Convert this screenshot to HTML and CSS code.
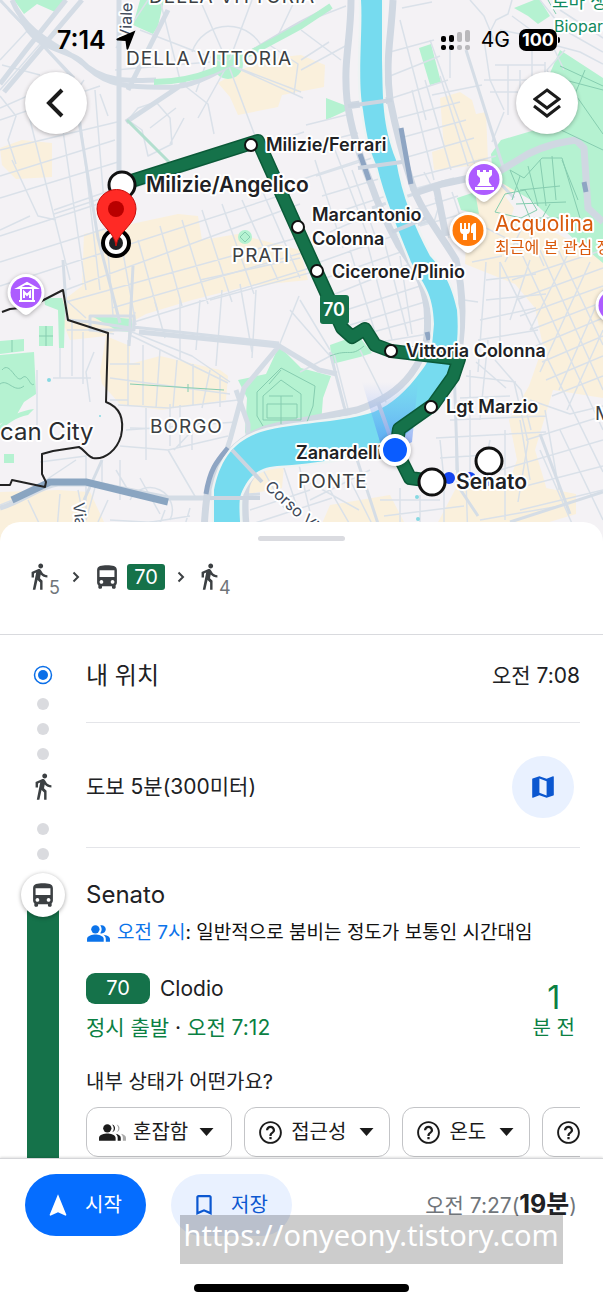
FILE: index.html
```
<!DOCTYPE html>
<html lang="ko">
<head>
  <meta charset="UTF-8" />
  <meta name="viewport" content="width=device-width, initial-scale=1.0"/>
  <title>Senato - Milizie/Angelico</title>
  <link rel="stylesheet" href="styles.css">
</head>
<body>
  <!-- Icons -->
  <svg class="sprite" width="0" height="0" aria-hidden="true">
    <symbol id="walk" viewBox="5 1 15 23"><path d="M13.5 5.5c1.1 0 2-.9 2-2s-.9-2-2-2-2 .9-2 2 .9 2 2 2zM9.8 8.9L7 23h2.1l1.8-8 2.1 2v6h2v-7.5l-2.1-2 .6-3C14.8 12 16.8 13 19 13v-2c-1.9 0-3.5-1-4.3-2.4l-1-1.6c-.4-.6-1-1-1.7-1-.3 0-.5.1-.8.1L6 8.3V13h2V9.6l1.8-.7"/></symbol>
    <symbol id="bus" viewBox="3 1 18 21"><path d="M4 16c0 .88.39 1.67 1 2.22V20c0 .55.45 1 1 1h1c.55 0 1-.45 1-1v-1h8v1c0 .55.45 1 1 1h1c.55 0 1-.45 1-1v-1.78c.61-.55 1-1.34 1-2.22V6c0-3.5-3.58-4-8-4s-8 .5-8 4v10zm3.5 1c-.83 0-1.5-.67-1.5-1.5S6.67 14 7.5 14s1.5.67 1.5 1.5S8.33 17 7.5 17zm9 0c-.83 0-1.5-.67-1.5-1.5s.67-1.5 1.5-1.5 1.5.67 1.5 1.5-.67 1.5-1.5 1.5zm1.5-5.500H6V6h12v5.500z"/></symbol>
    <symbol id="people" viewBox="0 2 24 20"><path d="M16.67 13.13C18.04 14.06 19 15.32 19 17v3h4v-3c0-2.18-3.57-3.47-6.33-3.87zM15 12c2.210 0 4-1.79 4-4s-1.79-4-4-4c-.47 0-.91.1-1.33.24C14.5 5.27 15 6.58 15 8s-.5 2.73-1.33 3.76c.42.14.86.24 1.33.24z"/><circle cx="9" cy="8" r="4"/><path d="M9 13c-2.670 0-8 1.340-8 4v3h16v-3c0-2.660-5.330-4-8-4z"/></symbol>
    <symbol id="crowd" viewBox="0 3 28 18"><circle cx="9" cy="8" r="4"/><path d="M9 13c-2.670 0-8 1.340-8 4v3h16v-3c0-2.660-5.330-4-8-4zM13.700 4.200a4 4 0 0 1 0 7.600 6 6 0 0 0 0-7.600zM17 13.200c2.700.6 5 1.800 5 3.800v3h-3v-3c0-1.600-.8-2.800-2-3.800z"/><path fill="#a9a9a9" d="M18 4.200a4 4 0 0 1 0 7.600 6 6 0 0 0 0-7.600zM22 13.200c2.700.6 5 1.800 5 3.800v3h-3v-3c0-1.600-.8-2.800-2-3.800z"/></symbol>
    <symbol id="help" viewBox="1 1 22 22"><path d="M11 18h2v-2h-2v2zm1-16C6.480 2 2 6.480 2 12s4.480 10 10 10 10-4.480 10-10S17.520 2 12 2zm0 18.300c-4.600 0-8.300-3.700-8.300-8.300S7.400 3.700 12 3.700s8.300 3.700 8.300 8.300-3.700 8.300-8.300 8.300zM12 6c-2.210 0-4 1.790-4 4h2c0-1.100.9-2 2-2s2 .9 2 2c0 2-3 1.750-3 5h2c0-2.250 3-2.500 3-5 0-2.210-1.790-4-4-4z"/></symbol>
    <symbol id="foldmap" viewBox="2 2 20 20"><path d="M20.5 3l-.16.03L15 5.1 9 3 3.36 4.9c-.21.07-.36.25-.36.48V20.5c0 .28.22.5.5.5l.16-.03L9 18.9l6 2.1 5.640-1.900c.21-.07.36-.25.36-.48V3.500c0-.28-.22-.5-.5-.5zM15 19l-6-2.110V5l6 2.110V19z"/></symbol>
    <symbol id="chevron" viewBox="0 0 8 12"><path d="M1.500 1.500L6 6l-4.500 4.500" fill="none" stroke="currentColor" stroke-width="2"/></symbol>
    <symbol id="caret" viewBox="0 0 14 8"><path d="M0 0h14L7 8z"/></symbol>
    <symbol id="pin" viewBox="0 0 40 46"><path d="M20 1a18.500 18.500 0 0 1 18.500 18.500c0 9-6 13.500-11 17.500-3 2.500-5 5-7.500 5s-4.500-2.500-7.500-5c-5-4-11-8.500-11-17.500A18.500 18.500 0 0 1 20 1z" fill="#fff"/><circle cx="20" cy="19.500" r="15.500"/></symbol>
  </svg>

  <section class="map">
    <svg class="map-canvas" viewBox="0 0 603 542" preserveAspectRatio="xMidYMin slice">
      <defs>
        <linearGradient id="beam" x1="0" y1="1" x2="0" y2="0">
          <stop offset="0" stop-color="#3f7cf5" stop-opacity=".6"/>
          <stop offset="1" stop-color="#7fa6ff" stop-opacity="0"/>
        </linearGradient>
      </defs>
      <rect class="land" width="603" height="542"/>

      <!-- commercial areas -->
      <g class="beige">
        <path d="M0 148l22-8 30 3v34l-36 2-14-14z"/>
        <path d="M240 70l32-12 29-3 24 10-1 22-42 8-4 12-40 8-8-18-12-14z"/>
        <path d="M84 234l38-8 56-12 20 2 4 24 36-6 62 16 8 30-60 6-56 14-46 14-40 22-36 4-14-34 26-20z"/>
        <path d="M106 336l24 10v18l30-8 60 14 8 6-2 24-64 10-42-6-18-20-2-12z"/>
        <path d="M440 98l20-6 12 8 4 14 10-2 2 50 24 4 2 26-14 6-12-34-54 6-2-18 12-4z"/>
        <path d="M468 200l34-8 12 16-4 12 44 12 49 26v140l-50-8-18 60 12 40-20 32h-22l-4-18 16-44-8-40 20-34 14-40-8-38-20-24-50-20z"/>
        <path d="M0 492l58-2 32 2 14 30-10 20H0zM246 480l18-14 20 0-2 22-34 6zM330 505l60-10 14 27-20 20h-70z"/>
        <path d="M456 488l60-6 60 12 0 20-60 18-80-6z"/>
      </g>

      <!-- parks -->
      <g class="park">
        <path d="M14 0l10 14 13-10 18 8L66 0zM140 0h24l-6 26-5 8-20-9z"/>
        <path d="M560 50l43 28v185l-28-23-44-40-38-22-2-24 10-14 34-10 14-22 16-8-18-20z"/>
        <path d="M514 8l20-8h6l10 16-12 8-10-8zM419 48l12-4 10 38-11 3zM326 98l26 10-26 12zM457 198l18-6 4 22-18-4z"/>
        <path d="M279 346l22 22 30 8-8 22-2 26-52 8-18 12-6-12 2-34-9-18 28-6z"/>
        <path d="M330 345l28-10 14 18-12 4-28 7zM0 341l24-2v12L0 354zM39 326h14v20H39zM90 315l42 4v13l-14-1z"/>
        <path d="M0 355l34-3 2 42-12 8-8 14-16 8zM44 298l18 0 3 10-1 40-5 0-1-38-13-5zM0 425c12-10 20-14 34-16l-6 6c-12 2-22 10-28 16zM4 454h10v9H4z"/>
        <circle cx="228" cy="64" r="15"/><circle cx="245" cy="237" r="7"/>
      </g>

      <!-- streets -->
      <path class="street" d="M0 108l64-28M0 120l100-34M0 176l115-36M0 150l117-28M0 198l118-36M54 210l196-68M54 214l250-82M0 236l110-36M0 262l120-38M0 286l310-100M60 292l240-88M66 302l238-66M112 308l200-58M134 322l176-54M0 230l30-14M12 160l26 56 18 4M30 120l40 160M60 110l26 180M78 100l22 190M95 90l18 225M118 225l18 100M138 240l20 72M160 226l22 80M182 220l26 84M202 210l30 92M222 204l32 90M242 200l36 80M262 190l38 88M0 96l16 20-8 24 8 24"/>
      <path class="street" d="M0 60l28-30 40 44M28 30l-20-20M0 90l40-46M40 75l-38-10M84 80l-10 14M100 94l8 22M128 120l14 10 6 26 24-12-2-26-14-16-18 6zM170 144l14-26M150 128l26-20M196 92l14-40M180 82l28 22 6 30M228 64l-30 54M228 64l30 80M228 64l73 28M228 64l-88-34M228 64L200 0M228 64L252 0M192 52a38 38 0 0 1 72 0M228 64l75 34M148 0l-32 48M160 0l20 80M115 70l95-8M295 0l-20 42M268 44l30 20-4 30M301 60l28-18M301 70l48-26M301 30l40 30M310 20l36-14M306 125l40-10M310 145l48-12M316 176l56-18M322 196l60-18M326 216l60-20M330 232l50-22M315 160l28 88M335 150l32 84M352 170l26 74M300 180l60-20"/>
      <path class="street" d="M390 52l44-12M390 76l50-20M392 98l56-18M398 118l62-16M400 138l66-18M404 158l70-20M410 178l86-22M400 20l26 100M412 90l22 90M425 80l26 90M440 76l28 90M402 8l30-6M430 40l54 150M450 38v40M432 95l50-10M484 40l6 40 14 30M484 80h50M490 92h44M495 65h50M508 65v50M520 70v45M532 30v90M545 62v30M504 112l-12 30M486 40l10-20 12-6 4-14M470 0l14 16 10 24 16 4M500 30l50 10 14 30M512 16l38 28 30 8 23 12M540 0l24 30 39 22M560 10l43 28M565 50l-18 20 10 20M410 190l44-12M414 210l44-14M420 226l42-12M424 172l16 30-6 20M435 198l14 40M452 192l12 36"/>
      <path class="street" d="M66 300l20 18M88 330l26 4M67 330h40M72 320v56M83 332v52M94 352l-8 20 4 30M60 348v30M53 378h38M37 370v70M110 364h30M110 378l120 16M110 400h18M128 340v65M143 345v60M160 350l-4 58M177 360l-4 48M193 364v42M210 370l-8 38M220 375v32M130 335l98 48M132 332l60 24 38 26M135 312l-6 34M155 302l10 36M180 300v60M200 300l-4 50M222 290l-6 76M240 284l12 68M256 290l-4 68M200 280l100-22M210 300l110-30M118 405l50 3 70-8M146 408v52M180 405v42M192 430v20M170 404v42M204 418l-30 32M126 430l110-8M130 428l40 1M120 446l48 4 60-14M168 450l28 48M102 460v22M86 455v64M40 462l46-6M46 480l30-20M120 460v40M0 505l40-16M28 500l20 42M60 494l-4 48M78 490l10 50M96 484l-10 36M108 500l-10 22M116 470l12 20M140 478l20 36M165 510l-12 32M190 508l-10 34M110 520l70 4M100 530l90-14M130 500a22 22 0 0 1 40 20"/>
      <path class="street" d="M320 262l90-32M320 280l98-34M330 296l90-36M340 312l80-26M350 325l78-24M362 335l66-18M380 342l48-8M350 250l28 92M368 246l24 94M384 240l24 96M400 256l12 78M300 300l30 50M290 310l40 46M279 346l20-50M300 372l34-18M334 354l22 86M360 350l30 60M240 488l30-36M262 468l22 40M280 456l20 60M296 452l14 60M250 510l60-20M252 524l80-26M310 500l60-30M305 480l54 30M330 490l30 52M350 480l30 60M380 500h60M400 488v52M420 495v47M444 490v50M466 480l2 62M384 516l80-10M440 458l60-4M436 438l110-6M450 420l96-4M460 398l50-2M466 376l50 6M440 440l4 40M456 410v60M470 370v110M488 340l-8 80M495 360l26 30 10 40M476 362l30 26M486 262l-8 110M500 262v90M478 340l60-10M480 320l56-12M486 300l60-6M486 280l50-6M490 440l-6 30M505 430v90M520 420l10 60M545 410l14 80M500 470l103-30M510 490l93-24M520 510l83-20M480 520l80-14M540 450l40 92M560 430l43 90"/>
      <path class="street" d="M500 262l103 210M520 250l83 180M540 250l63 140M556 245l47 100M512 280l91-30M516 300l87-32M520 316l83-30M530 330l73-28M536 346l67-28M542 362l61-26M546 380l57-24M552 396l51-20M530 260l-20 60M570 250l-40 80M590 262l-50 110M603 290l-44 100M603 330l-36 80M530 400l40 14 33-8M526 440l77-24M514 382l14 60-10 60M505 262l20-40M524 222l20 44M480 225l40 20M464 300l14 2M472 262l30-6"/>
      <path class="road" d="M72 78l26 160 22 85M74 78L0 0M30 120l35-40M129 346l4-80M102 460l-18 40M200 498l60-4M232 448l22 22M330 352l14 54 10 30M466 50l38 120M488 170l26 28M540 434l30 80M510 522l93-30M454 366l4 120 20 30M372 208l48-16M390 234l42-14"/>
      <path class="road" d="M63 260l4 60M67 320l24 2 40 6M90 316h44v14H90zM133 327l146 16M350 438l34 104"/>

      <path class="avenue" d="M0 84l26-34 40-50M4 92L82 0M12 0c16 40 60 50 76 68 20 18 40 20 86 19 30-2 60-26 127-64L330 8M22 18c10 30 40 30 58 42 24 26 60 20 76 20M119 0v180M128 90l40-80M126 122l60-40"/>
      <path class="avenue" d="M0 508c22-6 40-22 58-24h40l70 14h38M210 500l20-60 14-52 35-42 40 24 18 4M236 390l12 34 0 16-18 14M279 346l-140-14"/>
      <path class="avenue wide" d="M351 0c0 40-8 60-4 100 4 30 14 60 24 84 6 18 16 40 28 62 14 20 24 32 28 62 2 30 0 44-16 66-12 16-30 28-54 36l-80 16c-40 8-62 40-70 70-2 16-4 30-2 46M393 0c-2 40-8 60-3 100 8 40 14 60 22 84 8 26 30 52 44 76 6 24 8 50 4 84M446 390l-30 32-20 18-94 18c-30 2-52 10-56 30-2 16 0 40 2 54M346 106l44-6M412 194l30-10 56-12 30-18c20-10 36-12 48-14l8 8 4 60 15 14M436 186l10 50"/>
      <path class="tunnel" d="M360 154l9 26M401 128l10 56M584 182l2 10M427 332l2 8M228 448c-10 12-18 20-22 46"/>
      <path class="tunnel wide" d="M12 500l38-18h36l82 20"/>

      <path class="greenway" d="M154 82c50 0 80-20 147-56l30-20"/>
      <path class="greenway thin" d="M127 120l42 42"/>
      <path class="contour" d="M510 170l14 8 18-20 20 0 18 60-50 0zM520 176l-8 24M528 166l10 40M540 160l6 46M552 156l4 44M520 190l40-4M516 204l50-2M562 160l16 40M550 204l-10 18M585 70l-10 24 28 40M560 66l43 20M565 80l38 10M540 120l63 30M495 212l10-18 20-4 12 20-16 8zM548 0l8 14"/>
      <path class="contour" d="M281 368l-24 24 0 24 6 10M281 368l34 18-2 20-6 16M281 380l-18 16v24h38v-26zM281 396v28M269 396l24 0M267 404h30v14h-30zM281 370l-12 14M330 356c20-8 20 2 34-10M2 370c8-10 14 14 20 8s8 10 12 6M0 384c8-6 14 10 24 2M39 336h14M46 326v20M12 340v12M130 384l94 6M188 384v8M245 232l5 5-5 5-5-5z"/>

      <!-- Tiber -->
      <path class="river-bank" d="M361 0c2 30-4 80 2 110 4 30 8 44 14 56 8 34 24 70 34 96 12 22 22 30 23 62-2 22-2 34-12 46-16 22-30 34-48 42-30 10-70 10-106 18-34 8-48 30-54 60v56h28c-2-24-4-44-1-52 8-18 16-26 36-28 40-2 80-10 108-18 26-14 46-36 60-64 12-24 14-48 12-74-6-28-16-42-27-54-16-30-28-60-34-96-14-36-13-60-14-100V0z"/>
      <path class="river" d="M361 0c2 30-4 80 2 110 4 30 8 44 14 56 8 34 24 70 34 96 12 22 22 30 23 62-2 22-2 34-12 46-16 22-30 34-48 42-30 10-70 10-106 18-34 8-48 30-54 60v56h28c-2-24-4-44-1-52 8-18 16-26 36-28 40-2 80-10 108-18 26-14 46-36 60-64 12-24 14-48 12-74-6-28-16-42-27-54-16-30-28-60-34-96-14-36-13-60-14-100V0z"/>
      <path class="bridge" d="M348 106l44-6M358 168l44-6M392 232l34-14M232 450l30 32M210 498h50M378 402l12 34"/>

      <!-- Vatican border -->
      <path class="border" d="M2 312l8-3 20-2 33-17 5 30 40 13-2 69c16 6 18 20 15 34-4 14-16 24-28 22-6-2-8-8-14-11l-26 4-11 3v20l4 8-1 5-33-7-2 5H0"/>
      <circle class="fountain" cx="49" cy="380" r="2"/><circle class="fountain" cx="100" cy="416" r="1"/>
      <circle class="fountain" cx="417" cy="497" r="2"/><circle class="fountain" cx="418" cy="519" r="2"/>

      <!-- area names -->
      <g class="area">
        <text x="149" y="3">DELLA VITTORIA</text>
        <text x="126" y="65">DELLA VITTORIA</text>
        <text x="232" y="262">PRATI</text>
        <text x="150" y="433">BORGO</text>
        <text x="298" y="488">PONTE</text>
        <text x="595" y="420">MONTI</text>
      </g>
      <text class="city" x="0" y="440">can City</text>
      <g class="street-name">
        <text transform="translate(131 40) rotate(-88)">Viale Angelico</text>
        <text transform="translate(73 503) rotate(84)">Via</text>
        <text transform="translate(264 488) rotate(42)">Corso Vittorio</text>
      </g>
      <text class="poi-green" x="552" y="8">로마 생태</text>
      <text class="poi-green small" x="554" y="32">Bioparco</text>

      <!-- bus route -->
      <path class="beam" d="M362 382h56l-6 60-16 8-16-8z"/>
      <path class="route-edge" d="M122 184l136-43 42 94 34 75 8 18 10 9 13-8 10 16 16 6 68 8-6 18-20 28-34 24-3 21 14 28 22 3"/>
      <path class="route" d="M122 184l136-43 42 94 34 75 8 18 10 9 13-8 10 16 16 6 68 8-6 18-20 28-34 24-3 21 14 28 22 3"/>
      <rect class="route-tag" x="320" y="295" width="29" height="29" rx="3"/>
      <text class="route-tag-text" x="334" y="316">70</text>
      <g class="stop">
        <circle cx="251" cy="145" r="6"/><circle cx="298" cy="227" r="6"/><circle cx="317" cy="271" r="6"/>
        <circle cx="391" cy="351" r="6"/><circle cx="431" cy="407" r="6"/>
      </g>
      <g class="stop-name">
        <text x="266" y="151">Milizie/Ferrari</text>
        <text x="312" y="221">Marcantonio</text>
        <text x="312" y="245">Colonna</text>
        <text x="332" y="278">Cicerone/Plinio</text>
        <text x="406" y="357">Vittoria Colonna</text>
        <text x="446" y="413">Lgt Marzio</text>
        <text x="296" y="459">Zanardelli</text>
      </g>
      <g class="walk-dots"><circle cx="449" cy="478" r="6"/><circle cx="470" cy="478" r="6"/><circle cx="488" cy="480" r="6"/></g>
      <g class="stop big"><circle cx="122" cy="185" r="13"/><circle cx="432" cy="482" r="13"/><circle cx="489" cy="461" r="13"/></g>
      <g class="stop-name end">
        <text x="146" y="192">Milizie/Angelico</text>
        <text x="456" y="489">Senato</text>
      </g>
      <circle class="me" cx="395" cy="450" r="14"/>
      <circle class="target" cx="116" cy="243" r="13"/>
      <circle cx="116" cy="243" r="7"/>
      <path class="dest" d="M116 246c-1-15-19-21-19-37a19.500 19.500 0 0 1 39 0c0 16-18 22-20 37z"/>
      <circle class="dest-core" cx="116" cy="209" r="8"/>

      <!-- places -->
      <g class="places">
        <use href="#pin" x="464" y="160" width="40" height="46" fill="#ad5cff"/>
        <path class="glyph" d="M477 170h3v2h3v-2h3v2h3v-2h3v5l-3 3v4l3 4h-15l3-4v-4l-3-3zM475 187h19v3h-19z"/>
        <use href="#pin" x="448" y="211" width="40" height="46" fill="#ff7a0a"/>
        <path class="glyph" d="M460 223h2v6h2v-6h2v6h2v-6h2v7c0 2-1 4-3 4v6h-4v-6c-2 0-3-2-3-4zM473 240v-7h-2v-5c0-3 2-5 5-5v17z"/>
        <use href="#pin" x="6" y="273" width="40" height="46" fill="#ad5cff"/>
        <path class="glyph-line" d="M18 288l9-5 9 5zM19 301h16M21 289v11M33 289v11M24 298v-6l3 3 3-3v6"/>
        <use href="#pin" x="594" y="286" width="40" height="46" fill="#ad5cff"/>
      </g>
      <text class="poi-food" x="495" y="231">Acquolina</text>
      <text class="poi-food small" x="495" y="253">최근에 본 관심 장소</text>
    </svg>

    <header class="overlay">
      <div class="status-bar">
        <span class="clock">7:14</span>
        <svg class="locator" viewBox="0 0 20 20" width="20" height="20"><path d="M19.500.5L1 8.500c-1 .5-.8 1.700.3 1.900l8.200.6 1 7.800c.2 1.100 1.300 1.200 1.800.2z"/></svg>
        <svg class="signal" viewBox="0 0 30 20" width="30" height="20">
          <rect x="0" y="6" width="5" height="6" rx="2"/><rect x="8" y="5" width="5" height="7" rx="2"/>
          <rect x="0" y="15" width="5" height="5" rx="2"/><rect x="8" y="15" width="5" height="5" rx="2"/>
          <g fill="#b9b8bb">
            <rect x="16" y="2" width="5" height="10" rx="2"/><rect x="24" y="0" width="5" height="12" rx="2"/>
            <rect x="16" y="15" width="5" height="5" rx="2"/><rect x="24" y="15" width="5" height="5" rx="2"/>
          </g>
        </svg>
        <span class="network">4G</span>
        <span class="battery">100</span>
      </div>
      <div class="map-controls">
        <button type="button" class="round-btn" aria-label="뒤로">
          <svg viewBox="0 0 20 32" width="20" height="32"><path d="M16 3L3 16l13 13" fill="none" stroke="#1b1b1b" stroke-width="4"/></svg>
        </button>
        <button type="button" class="round-btn" aria-label="레이어">
          <svg viewBox="0 0 28 30" width="28" height="30"><path d="M14 2l12 9-12 9L2 11zM1 18l13 10 13-10" fill="none" stroke="#1b1b1b" stroke-width="3"/></svg>
        </button>
      </div>
    </header>
  </section>

  <main class="sheet">
    <div class="summary">
      <span class="handle"></span>
      <div class="legs">
        <svg class="icon-walk"><use href="#walk"/></svg><span class="minutes">5</span>
        <svg class="icon-chevron"><use href="#chevron"/></svg>
        <svg class="icon-bus"><use href="#bus"/></svg>
        <span class="line-tag">70</span>
        <svg class="icon-chevron"><use href="#chevron"/></svg>
        <svg class="icon-walk"><use href="#walk"/></svg><span class="minutes">4</span>
      </div>
    </div>

    <ol class="steps">
      <li class="step">
        <div class="rail start">
          <svg width="20" height="20" viewBox="0 0 20 20"><circle cx="10" cy="10" r="8.500" fill="none" stroke="#0b6fe8" stroke-width="1.500"/><circle cx="10" cy="10" r="5" fill="#0b6fe8"/></svg>
          <i class="dot"></i>
        </div>
        <div class="content place">
          <h2>내 위치</h2>
          <time>오전 7:08</time>
        </div>
      </li>
      <li class="step">
        <div class="rail">
          <i class="dot"></i>
          <i class="dot"></i>
          <svg class="icon-walk"><use href="#walk"/></svg>
          <i class="dot after-walk"></i>
        </div>
        <div class="content walking">
          <p>도보 5분(300미터)</p>
          <button type="button" class="map-btn" aria-label="지도"><svg width="24" height="24"><use href="#foldmap"/></svg></button>
        </div>
      </li>
      <li class="step ride">
        <div class="rail">
          <i class="dot"></i>
          <span class="bus-stop"><svg class="icon-bus"><use href="#bus"/></svg></span>
          <i class="line"></i>
        </div>
        <div class="content">
          <h2>Senato</h2>
          <p class="crowding"><svg width="25" height="21"><use href="#people"/></svg><span><b>오전 7시</b>: 일반적으로 붐비는 정도가 보통인 시간대임</span></p>
          <div class="departure">
            <div>
              <p class="heading"><span class="line-pill">70</span>Clodio</p>
              <p class="on-time">정시 출발 <span>·</span> <time>오전 7:12</time></p>
            </div>
            <p class="ago"><strong>1</strong>분 전</p>
          </div>
          <p class="question">내부 상태가 어떤가요?</p>
          <div class="chips">
            <button type="button" class="chip crowd"><svg width="29" height="19"><use href="#crowd"/></svg>혼잡함<svg class="caret"><use href="#caret"/></svg></button>
            <button type="button" class="chip"><svg width="25" height="25"><use href="#help"/></svg>접근성<svg class="caret"><use href="#caret"/></svg></button>
            <button type="button" class="chip"><svg width="25" height="25"><use href="#help"/></svg>온도<svg class="caret"><use href="#caret"/></svg></button>
            <button type="button" class="chip" aria-label="기타"><svg width="25" height="25"><use href="#help"/></svg><svg class="caret"><use href="#caret"/></svg></button>
          </div>
        </div>
      </li>
    </ol>
  </main>

  <footer class="bottom-bar">
    <div class="actions">
      <button type="button" class="action primary"><svg width="18" height="22" viewBox="4 2 16 19"><path d="M12 2L4.500 20.300l.7.700L12 18l6.800 3 .7-.7z"/></svg>시작</button>
      <button type="button" class="action"><svg width="18" height="22" viewBox="4 2 16 20"><path d="M17 3H7c-1.100 0-2 .9-2 2v16l7-3 7 3V5c0-1.100-.9-2-2-2zm0 15l-5-2.180L7 18V5h10v13z"/></svg>저장</button>
      <p class="arrival">오전 7:27(<strong>19분</strong>)</p>
    </div>
    <span class="watermark">https://onyeony.tistory.com</span>
    <span class="home-bar"></span>
  </footer>
</body>
</html>
```
FILE: styles.css
```
* {
  box-sizing: border-box;
}

body {
  margin: 0;
  height: 100vh;
  display: flex;
  flex-direction: column;
  overflow: hidden;
  background: #fff;
  color: #202124;
  font-family: Inter, "Noto Sans CJK KR", sans-serif;
  font-size: 20px;
  line-height: 28px;
}

h2, p, ol {
  margin: 0;
  padding: 0;
  font-weight: 400;
}

button {
  border: none;
  padding: 0;
  font: inherit;
  color: inherit;
  cursor: pointer;
}

svg {
  fill: currentColor;
  flex-shrink: 0;
}

.sprite {
  position: absolute;
}

/* map */
.map {
  position: relative;
  height: 542px;
  flex-shrink: 0;
}

.map-canvas {
  display: block;
  width: 100%;
  height: 100%;
}

.land { fill: #f4f2f5; }
.beige { fill: #faf0dc; }
.park { fill: #b5f2d1; }

.street, .road, .avenue, .tunnel, .bridge, .greenway, .contour, .border, .route, .route-edge {
  fill: none;
  stroke-linejoin: round;
}

.street {
  stroke: #dae1e9;
  stroke-width: 1.5px;
}

.road {
  stroke: #d5dde6;
  stroke-width: 3px;
}

.avenue {
  stroke: #d4dce5;
  stroke-width: 5px;
}

.avenue.wide {
  stroke: #d0d8e2;
  stroke-width: 7px;
}

.tunnel {
  stroke: #8ea5c3;
  stroke-width: 5px;
}

.tunnel.wide {
  stroke: #8aa5c1;
  stroke-width: 7px;
}

.greenway {
  stroke: #b5f0d0;
  stroke-width: 6px;
}

.greenway.thin {
  stroke: #b3dfcf;
  stroke-width: 3px;
}

.contour {
  stroke: #86cdb0;
  stroke-width: 1px;
}

.river { fill: #76dbef; }

.river-bank {
  fill: none;
  stroke: #eef3f3;
  stroke-width: 5px;
}

.bridge {
  stroke: #ccd5e0;
  stroke-width: 4px;
}

.border {
  stroke: #222;
  stroke-width: 2px;
}

.fountain { fill: #86d9e2; }
.beam { fill: url(#beam); }

.map text {
  font-family: Inter, "Noto Sans CJK KR", sans-serif;
  paint-order: stroke;
  stroke: #fff;
  stroke-width: 4px;
  stroke-linejoin: round;
}

.area text {
  font-size: 19px;
  letter-spacing: 1px;
  fill: #3c4043;
}

.map .city {
  font-size: 24px;
  fill: #2b2d30;
}

.street-name text {
  font-size: 16px;
  fill: #3f4a5a;
}

.map .poi-green {
  font-size: 18px;
  fill: #128a5e;
}

.map .poi-food {
  font-size: 21px;
  fill: #d9590b;
}

.map .small {
  font-size: 16px;
}

.route-edge {
  stroke: #0b5a38;
  stroke-width: 14px;
}

.route {
  stroke: #15724a;
  stroke-width: 11px;
}

.route-tag { fill: #15724a; }

.map .route-tag-text {
  font-size: 18px;
  font-weight: 600;
  fill: #fff;
  stroke: none;
  text-anchor: middle;
}

.stop {
  fill: #fff;
  stroke: #111;
  stroke-width: 2px;
}

.stop.big {
  stroke-width: 3px;
}

.stop-name text {
  font-size: 18px;
  font-weight: 600;
  fill: #202124;
}

.stop-name.end text {
  font-size: 21px;
}

.walk-dots { fill: #1546f0; }

.me {
  fill: #0a5cff;
  stroke: #fff;
  stroke-width: 4px;
  filter: drop-shadow(0 1px 2px rgba(0, 0, 0, 0.3));
}

.target {
  fill: #fff;
  stroke: #000;
  stroke-width: 4px;
}

.dest {
  fill: #ff2a25;
  stroke: #c80f0c;
  stroke-width: 1px;
}

.dest-core { fill: #b90000; }

.places {
  filter: drop-shadow(0 1px 2px rgba(0, 0, 0, 0.3));
}

.glyph { fill: #fff; }

.glyph-line {
  fill: none;
  stroke: #fff;
  stroke-width: 2px;
}

/* status bar and map buttons lie over the map */
.overlay {
  position: absolute;
  top: 0;
  left: 0;
  right: 0;
}

.status-bar {
  display: flex;
  align-items: center;
  height: 72px;
  padding: 8px 46px 0 57px;
  color: #000;
}

.clock {
  font-size: 25px;
  font-weight: 600;
}

.locator {
  margin-left: 10px;
}

.signal {
  margin-left: auto;
}

.network {
  margin: 0 9px 0 10px;
  font-size: 21px;
}

.battery {
  position: relative;
  width: 38px;
  border-radius: 7px;
  background: #000;
  color: #fff;
  font-size: 18px;
  font-weight: 700;
  line-height: 22px;
  text-align: center;
}

.battery::after {
  content: "";
  position: absolute;
  top: 8px;
  right: -3px;
  width: 2px;
  height: 6px;
  border-radius: 0 2px 2px 0;
  background: #000;
}

.map-controls {
  display: flex;
  justify-content: space-between;
  padding: 0 25px;
}

.round-btn {
  display: flex;
  align-items: center;
  justify-content: center;
  width: 62px;
  height: 62px;
  border-radius: 50%;
  background: #fff;
  box-shadow: 0 1px 4px rgba(0, 0, 0, 0.3);
}

/* sheet */
.sheet {
  position: relative;
  flex: 1;
  min-height: 0;
  margin-top: -20px;
  display: flex;
  flex-direction: column;
  overflow: hidden;
  border-radius: 20px 20px 0 0;
  background: #fff;
}

.summary {
  flex-shrink: 0;
  display: flex;
  flex-direction: column;
  align-items: center;
  height: 113px;
  padding-top: 14px;
  border-bottom: 1px solid #d9dade;
}

.handle {
  width: 87px;
  height: 5px;
  border-radius: 3px;
  background: #dadbe0;
}

.legs {
  align-self: stretch;
  display: flex;
  align-items: center;
  padding: 11px 30px 0;
  color: #3c4043;
}

.icon-walk {
  width: 19px;
  height: 28px;
}

.icon-bus {
  width: 24px;
  height: 26px;
}

.icon-chevron {
  width: 8px;
  height: 12px;
  margin: 0 15px 0 12px;
}

.minutes {
  padding-top: 22px;
  font-size: 18px;
  color: #70757a;
}

.line-tag {
  margin-left: 8px;
  width: 38px;
  border-radius: 3px;
  background: #15724a;
  color: #fff;
  line-height: 26px;
  text-align: center;
}

/* steps */
.steps {
  list-style: none;
}

.step {
  display: grid;
  grid-template-columns: 86px minmax(0, 1fr);
  padding-right: 23px;
}

.rail {
  display: flex;
  flex-direction: column;
  align-items: center;
  gap: 13px;
  color: #3c4043;
}

.rail.start {
  padding-top: 30px;
}

.dot {
  width: 12px;
  height: 12px;
  border-radius: 50%;
  background: #dadbdf;
}

.after-walk {
  margin-top: 9px;
}

.content {
  border-bottom: 1px solid #e4e5e9;
}

.content h2 {
  font-size: 24px;
  line-height: 32px;
}

.place {
  display: flex;
  align-items: center;
  justify-content: space-between;
  height: 88px;
  padding-bottom: 6px;
  font-size: 21px;
}

.walking {
  display: flex;
  align-items: center;
  justify-content: space-between;
  height: 125px;
  padding: 3px 6px 0 0;
  font-size: 21px;
}

.map-btn {
  display: flex;
  align-items: center;
  justify-content: center;
  width: 62px;
  height: 62px;
  border-radius: 50%;
  background: #e9f1ff;
  color: #0b57d0;
}

/* line fills whatever is left of the row */
.ride .rail {
  min-height: 330px;
}

.bus-stop {
  position: relative;
  z-index: 1;
  display: flex;
  align-items: center;
  justify-content: center;
  width: 44px;
  height: 44px;
  border-radius: 50%;
  background: #fff;
  box-shadow: 0 1px 4px rgba(0, 0, 0, 0.35);
}

.line {
  flex: 1;
  width: 32px;
  margin-top: -24px;
  background: #15724a;
}

.ride .content {
  padding-top: 31px;
  border: none;
}

.crowding {
  display: flex;
  align-items: center;
  gap: 6px;
  margin-top: 8px;
  font-size: 19px;
  color: #111;
}

.crowding svg, .crowding b {
  color: #0b73ea;
  font-weight: 400;
}

.departure {
  display: flex;
  align-items: flex-end;
  justify-content: space-between;
  margin-top: 26px;
  padding-right: 5px;
}

.heading {
  display: flex;
  align-items: center;
  gap: 10px;
  font-size: 21px;
}

.line-pill {
  width: 64px;
  border-radius: 9px;
  background: #15724a;
  color: #fff;
  font-size: 20px;
  line-height: 31px;
  text-align: center;
}

.on-time {
  margin-top: 10px;
  color: #0b8043;
  font-size: 21px;
}

.on-time span {
  color: #202124;
}

.ago {
  color: #0b8043;
  text-align: center;
}

.ago strong {
  display: block;
  font-size: 32px;
  font-weight: 400;
  line-height: 32px;
}

.question {
  margin-top: 26px;
}

.chips {
  display: flex;
  gap: 12px;
  margin-top: 11px;
  overflow: hidden;
}

.chip {
  flex-shrink: 0;
  display: flex;
  align-items: center;
  gap: 8px;
  height: 50px;
  padding: 0 15px 0 13px;
  border: 1px solid #c3c4c7;
  border-radius: 12px;
  background: #fff;
  color: #1b1b1b;
}

.chip.crowd {
  gap: 6px;
  padding: 0 17px 0 11px;
}

.caret {
  width: 15px;
  height: 8px;
  margin-left: 5px;
}

/* bottom bar */
.bottom-bar {
  position: relative;
  flex-shrink: 0;
  display: flex;
  flex-direction: column;
  justify-content: space-between;
  align-items: center;
  height: 146px;
  padding: 15px 26px 12px 25px;
  border-top: 1px solid #d5d6d9;
  background: #fff;
  box-shadow: 0 -1px 2px rgba(0, 0, 0, 0.12);
}

.actions {
  align-self: stretch;
  display: flex;
  align-items: center;
  gap: 25px;
}

.action {
  display: flex;
  align-items: center;
  justify-content: center;
  gap: 18px;
  width: 121px;
  height: 62px;
  border-radius: 31px;
  background: #e9f1ff;
  color: #0b57d0;
}

.action.primary {
  background: #056dff;
  color: #fff;
}

.arrival {
  margin-left: auto;
  font-size: 21px;
  color: #70757a;
}

.arrival strong {
  font-size: 25px;
  font-weight: 700;
  color: #202124;
}

.watermark {
  position: absolute;
  left: 50%;
  top: 56px;
  height: 49px;
  margin-left: -122px;
  padding: 0 4px;
  background: rgba(0, 0, 0, 0.2);
  color: #fff;
  font-family: "Noto Sans", sans-serif;
  font-size: 29px;
  line-height: 40px;
}

.home-bar {
  width: 215px;
  height: 8px;
  border-radius: 4px;
  background: #000;
}
```
